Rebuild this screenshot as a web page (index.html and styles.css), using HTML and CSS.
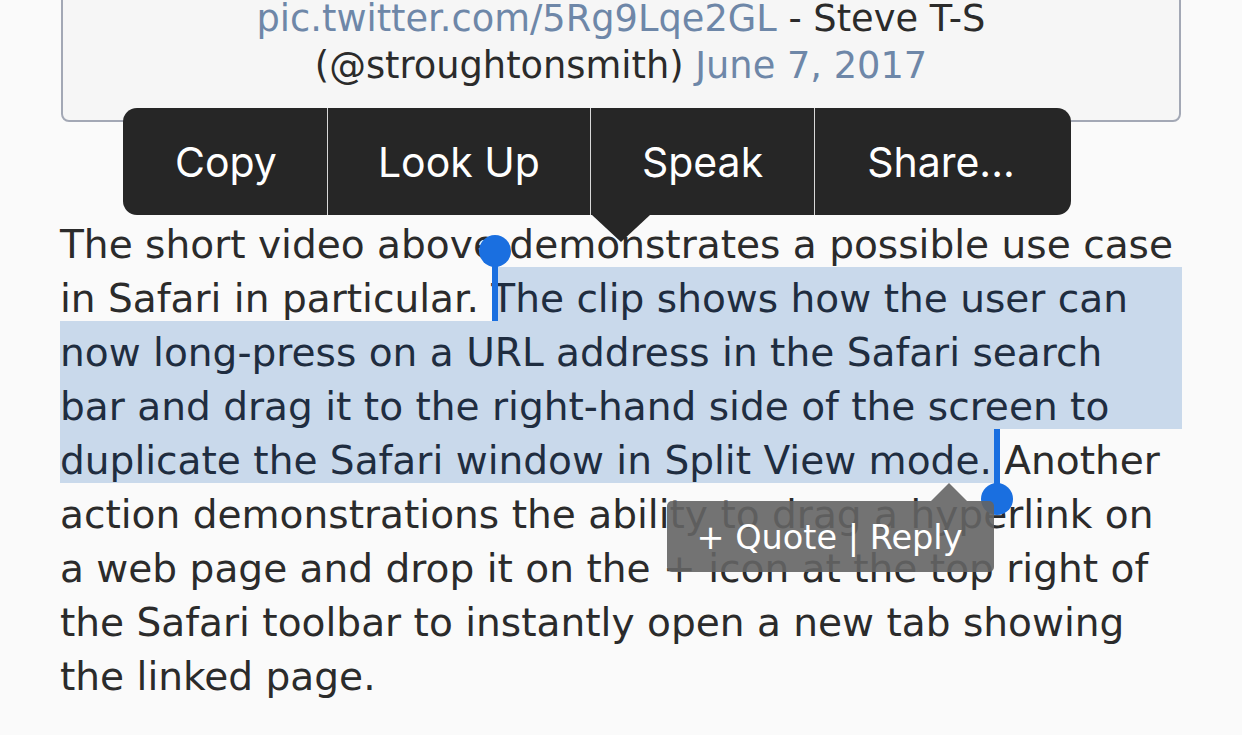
FILE: index.html
```html
<!DOCTYPE html>
<html lang="en">
<head>
<meta charset="utf-8">
<title>Article</title>
<link rel="stylesheet" href="styles.css">
</head>
<body>
<div class="page">
  <blockquote class="tweet">
    <p class="tweet-line"><a class="link" href="#">pic.twitter.com/5Rg9Lqe2GL</a> - Steve T-S</p>
    <p class="tweet-line">(@stroughtonsmith) <a class="link" href="#">June 7, 2017</a></p>
  </blockquote>

  <div class="article">
    <div class="sel sel-row1"></div>
    <div class="sel sel-rows"></div>
    <div class="sel sel-row4"></div>
    <p class="body-text">The short video above demonstrates a possible use case in Safari in particular. <span class="selected">The clip shows how the user can now long-press on a URL address in the Safari search bar and drag it to the right-hand side of the screen to duplicate the Safari window in Split View mode.</span> Another action demonstrations the ability to drag a hyperlink on a web page and drop it on the + icon at the top right of the Safari toolbar to instantly open a new tab showing the linked page.</p>
  </div>

  <div class="menu">
    <div class="menu-item">Copy</div>
    <div class="menu-item">Look Up</div>
    <div class="menu-item menu-speak">Speak</div>
    <div class="menu-item menu-share">Share...</div>
    <div class="menu-arrow"></div>
  </div>

  <div class="handle handle-start"><span class="knob"></span><span class="stem"></span></div>
  <div class="handle handle-end"><span class="stem"></span><span class="knob"></span></div>

  <div class="quote-tip">
    <div class="quote-arrow"></div>
    <span>+ Quote | Reply</span>
  </div>
</div>
</body>
</html>
```

FILE: styles.css
```css
html, body {
  margin: 0;
  padding: 0;
  background: #fafafa;
}

.page {
  position: relative;
  width: 1242px;
  height: 735px;
  overflow: hidden;
  padding: 0 60px;
  box-sizing: border-box;
  font-family: "DejaVu Sans", sans-serif;
  color: #2b2b2b;
}

.tweet {
  margin: -40px 1px 0 1px;
  padding: 33px 10px 31px;
  border: 2px solid #a3a8b5;
  border-radius: 8px;
  background: #f6f6f6;
  text-align: center;
  font-size: 36.75px;
  line-height: 47px;
}

.tweet-line {
  margin: 0;
}

.link {
  color: #6e87a8;
  text-decoration: none;
}

.article {
  position: relative;
  margin-top: 96px;
}

.body-text {
  position: relative;
  width: 1114px;
  margin: 0;
  font-size: 39.1px;
  line-height: 54px;
  color: #2b2b2b;
}

.selected {
  color: #1f2d40;
}

.sel {
  position: absolute;
  background: #c9d9eb;
}

.sel-row1 {
  left: 437px;
  right: 0;
  top: 49px;
  height: 54px;
}

.sel-rows {
  left: 0;
  right: 0;
  top: 103px;
  height: 108px;
}

.sel-row4 {
  left: 0;
  width: 937px;
  top: 211px;
  height: 54px;
}

/* Edit menu */
.menu {
  position: absolute;
  left: 123px;
  top: 108px;
  height: 107px;
  display: flex;
  background: #262626;
  border-radius: 14px;
  font-family: Inter, "Noto Sans", sans-serif;
  font-size: 41px;
  color: #ffffff;
}

.menu-item {
  display: flex;
  align-items: center;
  padding: 0 50px;
  border-left: 1px solid #d8d8d8;
}

.menu-item:first-child {
  border-left: none;
  padding-left: 52px;
}

.menu-speak {
  padding: 0 51px;
}

.menu-share {
  padding: 0 56px 0 52px;
}

.menu-arrow {
  position: absolute;
  left: 469px;
  top: 107px;
  width: 0;
  height: 0;
  border-left: 29px solid transparent;
  border-right: 29px solid transparent;
  border-top: 27px solid #262626;
}

/* Selection handles */
.handle {
  position: absolute;
  display: flex;
  flex-direction: column;
  align-items: center;
  width: 32px;
}

.knob {
  width: 32px;
  height: 32px;
  border-radius: 50%;
  background: #1a6fe0;
}

.stem {
  width: 6px;
  background: #1a6fe0;
}

.handle-start {
  left: 479px;
  top: 235px;
}

.handle-start .knob {
  margin-bottom: -16px;
}

.handle-start .stem {
  height: 70px;
}

.handle-end {
  left: 981px;
  top: 429px;
}

.handle-end .stem {
  height: 70px;
}

.handle-end .knob {
  margin-top: -16px;
}

/* Quote tooltip */
.quote-tip {
  position: absolute;
  left: 667px;
  top: 501px;
  width: 327px;
  height: 71px;
  display: flex;
  align-items: center;
  justify-content: center;
  background: rgba(100, 100, 100, 0.9);
  border-radius: 5px;
  font-family: "DejaVu Sans", sans-serif;
  font-size: 33.5px;
  color: #ffffff;
  box-sizing: border-box;
  padding: 2px 2px 0 0;
}

.quote-arrow {
  position: absolute;
  left: 264px;
  top: -18px;
  width: 0;
  height: 0;
  border-left: 18px solid transparent;
  border-right: 18px solid transparent;
  border-bottom: 18px solid rgba(100, 100, 100, 0.9);
}
```
